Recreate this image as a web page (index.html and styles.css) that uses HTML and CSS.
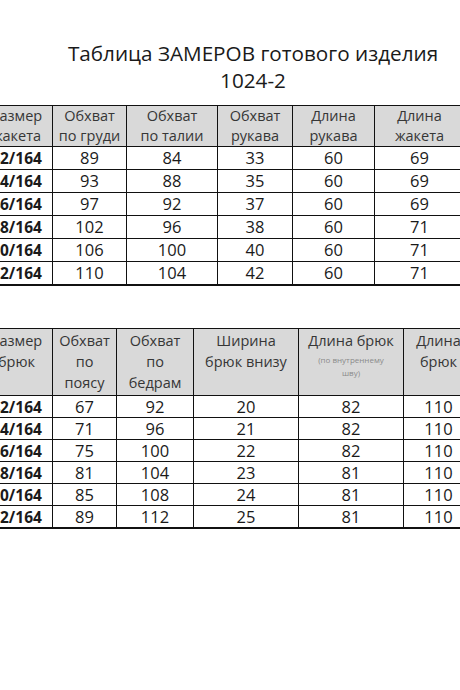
FILE: index.html
```html
<!DOCTYPE html>
<html lang="ru">
<head>
<meta charset="utf-8">
<link rel="stylesheet" href="styles.css">
</head>
<body>
<div class="page">
  <h1 class="title">Таблица ЗАМЕРОВ готового изделия<br>1024-2</h1>
  <table class="grid jacket">
    <colgroup>
      <col class="c-size"><col class="j2"><col class="j3"><col class="j4"><col class="j5"><col class="j6">
    </colgroup>
    <thead>
      <tr><th>Размер<br>жакета</th><th>Обхват<br>по груди</th><th>Обхват<br>по талии</th><th>Обхват<br>рукава</th><th>Длина<br>рукава</th><th>Длина<br>жакета</th></tr>
    </thead>
    <tbody>
      <tr><td class="sz">42/164</td><td>89</td><td>84</td><td>33</td><td>60</td><td>69</td></tr>
      <tr><td class="sz">44/164</td><td>93</td><td>88</td><td>35</td><td>60</td><td>69</td></tr>
      <tr><td class="sz">46/164</td><td>97</td><td>92</td><td>37</td><td>60</td><td>69</td></tr>
      <tr><td class="sz">48/164</td><td>102</td><td>96</td><td>38</td><td>60</td><td>71</td></tr>
      <tr><td class="sz">50/164</td><td>106</td><td>100</td><td>40</td><td>60</td><td>71</td></tr>
      <tr><td class="sz">52/164</td><td>110</td><td>104</td><td>42</td><td>60</td><td>71</td></tr>
    </tbody>
  </table>
  <table class="grid trousers">
    <colgroup>
      <col class="c-size"><col class="b2"><col class="b3"><col class="b4"><col class="b5"><col class="b6">
    </colgroup>
    <thead>
      <tr><th>Размер<br>брюк</th><th>Обхват<br>по<br>поясу</th><th>Обхват<br>по<br>бедрам</th><th>Ширина<br>брюк внизу</th><th>Длина брюк<span class="note">(по внутреннему<br>шву)</span></th><th>Длина<br>брюк</th></tr>
    </thead>
    <tbody>
      <tr><td class="sz">42/164</td><td>67</td><td>92</td><td>20</td><td>82</td><td>110</td></tr>
      <tr><td class="sz">44/164</td><td>71</td><td>96</td><td>21</td><td>82</td><td>110</td></tr>
      <tr><td class="sz">46/164</td><td>75</td><td>100</td><td>22</td><td>82</td><td>110</td></tr>
      <tr><td class="sz">48/164</td><td>81</td><td>104</td><td>23</td><td>81</td><td>110</td></tr>
      <tr><td class="sz">50/164</td><td>85</td><td>108</td><td>24</td><td>81</td><td>110</td></tr>
      <tr><td class="sz">52/164</td><td>89</td><td>112</td><td>25</td><td>81</td><td>110</td></tr>
    </tbody>
  </table>
</div>
</body>
</html>
```
FILE: styles.css
```css
html, body {
  margin: 0;
  padding: 0;
  background: #ffffff;
  overflow: hidden;
}
.page {
  width: 460px;
  height: 690px;
  overflow: hidden;
  font-family: "Open Sans", Lato, "Liberation Sans", sans-serif;
  color: #111;
}
.title {
  width: 506px;
  margin: 0;
  padding-top: 40px;
  font-size: 20.7px;
  font-weight: 400;
  line-height: 27px;
  text-align: center;
  color: #1a1a1a;
  white-space: nowrap;
}
.grid {
  border-collapse: collapse;
  table-layout: fixed;
  margin-left: -20px;
}
.jacket {
  width: 484px;
  margin-top: 11px;
}
.trousers {
  width: 493px;
  margin-top: 42px;
}
.grid th,
.grid td {
  border: 1px solid #111;
  padding: 0;
  text-align: center;
  white-space: nowrap;
}
.grid th {
  background: #d9d9d9;
  color: #363636;
  font-weight: 400;
  font-size: 14.5px;
  vertical-align: top;
}
.jacket th {
  height: 40px;
  line-height: 20px;
  padding: 0;
}
.trousers th {
  height: 65px;
  line-height: 21px;
  padding: 1px 0 0;
}
.grid td {
  font-size: 16.5px;
  line-height: 20px;
  color: #1a1a1a;
}
.jacket td { height: 22px; }
.trousers td { height: 21px; }
.grid tbody tr:last-child td {
  border-bottom-width: 2px;
}
.grid td.sz {
  font-weight: 700;
  font-size: 15.5px;
}
.note {
  display: block;
  font-size: 8px;
  line-height: 13px;
  color: #8a8a8a;
  padding-top: 2px;
}
.c-size { width: 72px; }
.j2 { width: 74px; }
.j3 { width: 91px; }
.j4 { width: 75px; }
.j5 { width: 82px; }
.j6 { width: 90px; }
.b2 { width: 64px; }
.b3 { width: 77px; }
.b4 { width: 105px; }
.b5 { width: 105px; }
.b6 { width: 70px; }
```
